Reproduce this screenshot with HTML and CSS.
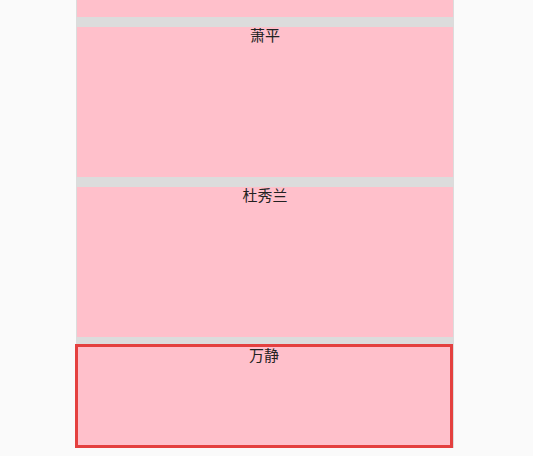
FILE: index.html
```html
<!DOCTYPE html>
<html lang="zh">
<head>
<meta charset="utf-8">
<link rel="stylesheet" href="styles.css">
</head>
<body>
<div class="list">
  <div class="item"></div>
  <div class="item">萧平</div>
  <div class="item">杜秀兰</div>
  <div class="item item-active">万静</div>
</div>
</body>
</html>
```
FILE: styles.css
```css
html, body {
  margin: 0;
  padding: 0;
  background: #fafafa;
  overflow: hidden;
}
.list {
  margin: -133px 0 0 76px;
  width: 378px;
  box-sizing: border-box;
  padding: 0 1px;
  background: #dcdcdc;
  display: flex;
  flex-direction: column;
  gap: 10px;
}
.item {
  height: 150px;
  background: #ffc0cb;
  text-align: center;
  font-family: "Noto Sans CJK SC", "Noto Sans", sans-serif;
  font-size: 15px;
  line-height: 16px;
  color: #222;
}
.item-active {
  box-sizing: border-box;
  height: 104px;
  margin-top: -3px;
  margin-left: -2px;
  border: 3px solid #e4403f;
}
```
